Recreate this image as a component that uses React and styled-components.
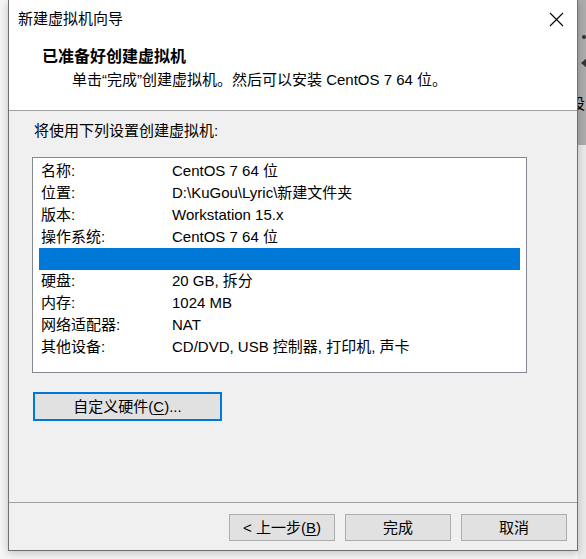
import React from "react";
import styled, { createGlobalStyle } from "styled-components";

const Global = createGlobalStyle`
  html, body { margin: 0; padding: 0; }
  body {
    background: #f5f5f5;
    font-family: "Liberation Sans", "Noto Sans CJK SC", sans-serif;
    font-size: 15px;
    color: #000;
  }
  * { box-sizing: border-box; }
`;

const Page = styled.div`
  display: flex;
  width: 586px;
  height: 559px;
  overflow: hidden;
`;

const LeftGap = styled.div`
  width: 8px;
  flex: none;
`;

const Window = styled.div`
  position: relative;
  z-index: 1;
  width: 570px;
  height: 551px;
  flex: none;
  display: flex;
  flex-direction: column;
  background: #f0f0f0;
  border: 1px solid #707070;
  border-top: none;
  box-shadow: 0 2px 8px rgba(0, 0, 0, 0.22);
`;

const RightStrip = styled.div`
  flex: 1;
  display: flex;
  flex-direction: column;
  overflow: hidden;
  background: #e9e9e9;
`;

const StripTop = styled.div`
  height: 145px;
  background: #acacac;
  display: flex;
  flex-direction: column;
  align-items: flex-start;
  padding-top: 34px;
  overflow: hidden;
`;

const StripIcon = styled.svg`
  display: block;
  margin-left: 3px;
  margin-top: ${(p) => p.$mt}px;
`;

const StripText = styled.div`
  margin-top: 26px;
  margin-left: -8px;
  font-size: 15px;
  line-height: 20px;
  white-space: nowrap;
`;

const TitleBar = styled.div`
  height: 38px;
  flex: none;
  background: #fff;
  display: flex;
  align-items: center;
  justify-content: space-between;
  padding-left: 9px;
`;

const Title = styled.div`
  font-size: 15px;
  line-height: 20px;
`;

const CloseBox = styled.div`
  width: 41px;
  height: 38px;
  display: flex;
  align-items: center;
  justify-content: center;
`;

const Header = styled.div`
  height: 73px;
  flex: none;
  background: #fff;
  border-bottom: 1px solid #a0a0a0;
  padding: 9px 0 0 33px;
`;

const HeaderTitle = styled.div`
  font-size: 16px;
  font-weight: 700;
  line-height: 20px;
`;

const HeaderSub = styled.div`
  margin-top: 3px;
  padding-left: 30px;
  line-height: 20px;
`;

const Body = styled.div`
  flex: 1;
  padding: 10px 0 0 23px;
  display: flex;
  flex-direction: column;
  align-items: flex-start;
`;

const Intro = styled.div`
  padding-left: 2px;
  line-height: 20px;
`;

const ListBox = styled.div`
  margin-top: 16px;
  width: 495px;
  height: 216px;
  background: #fff;
  border: 1px solid #828790;
  padding-top: 2px;
`;

const Row = styled.div`
  display: grid;
  grid-template-columns: 131px 1fr;
  height: 22px;
  line-height: 22px;
  margin: 0 6px;
  padding-left: 2px;
  background: ${(p) => (p.$selected ? "#0078d7" : "transparent")};
  color: ${(p) => (p.$selected ? "#fff" : "#000")};
  white-space: nowrap;
`;

const Button = styled.button`
  font-family: inherit;
  font-size: 15px;
  color: #000;
  background: #e1e1e1;
  border: ${(p) => (p.$focused ? "2px solid #0078d7" : "1px solid #adadad")};
  width: ${(p) => p.$w}px;
  height: ${(p) => p.$h}px;
  padding: 0;
  line-height: 20px;
  display: flex;
  align-items: center;
  justify-content: center;
  white-space: nowrap;
`;

const HardwareButton = styled(Button)`
  margin-top: 19px;
  margin-left: 1px;
`;

const Key = styled.span`
  text-decoration: underline;
  text-underline-offset: 2px;
`;

const Footer = styled.div`
  height: 48px;
  flex: none;
  border-top: 1px solid #a0a0a0;
  display: flex;
  justify-content: flex-end;
  align-items: flex-start;
  gap: 10px;
  padding: 11px 10px 0 0;
`;

const rows = [
  ["名称:", "CentOS 7 64 位"],
  ["位置:", "D:\\KuGou\\Lyric\\新建文件夹"],
  ["版本:", "Workstation 15.x"],
  ["操作系统:", "CentOS 7 64 位"],
  null,
  ["硬盘:", "20 GB, 拆分"],
  ["内存:", "1024 MB"],
  ["网络适配器:", "NAT"],
  ["其他设备:", "CD/DVD, USB 控制器, 打印机, 声卡"],
];

export default function App() {
  return (
    <>
      <Global />
      <Page>
        <LeftGap />
        <Window>
          <TitleBar>
            <Title>新建虚拟机向导</Title>
            <CloseBox>
              <svg width="15" height="15" viewBox="0 0 15 15">
                <path d="M1 1 L14 14 M14 1 L1 14" stroke="#000" strokeWidth="1.1" fill="none" />
              </svg>
            </CloseBox>
          </TitleBar>
          <Header>
            <HeaderTitle>已准备好创建虚拟机</HeaderTitle>
            <HeaderSub>单击“完成”创建虚拟机。然后可以安装 CentOS 7 64 位。</HeaderSub>
          </Header>
          <Body>
            <Intro>将使用下列设置创建虚拟机:</Intro>
            <ListBox>
              {rows.map((r, i) =>
                r ? (
                  <Row key={i}>
                    <span>{r[0]}</span>
                    <span>{r[1]}</span>
                  </Row>
                ) : (
                  <Row key={i} $selected>
                    <span />
                    <span />
                  </Row>
                )
              )}
            </ListBox>
            <HardwareButton $focused $w={189} $h={29}>
              自定义硬件(<Key>C</Key>)...
            </HardwareButton>
          </Body>
          <Footer>
            <Button $w={106} $h={27}>
              &lt; 上一步(<Key>B</Key>)
            </Button>
            <Button $w={106} $h={27}>完成</Button>
            <Button $w={106} $h={27}>取消</Button>
          </Footer>
        </Window>
        <RightStrip>
          <StripTop>
            <StripIcon $mt={0} width="6" height="6" viewBox="0 0 6 6">
              <circle cx="3" cy="3" r="2" fill="#333" />
            </StripIcon>
            <StripIcon $mt={18} width="6" height="10" viewBox="0 0 6 10">
              <path d="M0 5 L6 0 L6 10 Z" fill="#333" />
            </StripIcon>
            <StripText>设</StripText>
          </StripTop>
        </RightStrip>
      </Page>
    </>
  );
}
